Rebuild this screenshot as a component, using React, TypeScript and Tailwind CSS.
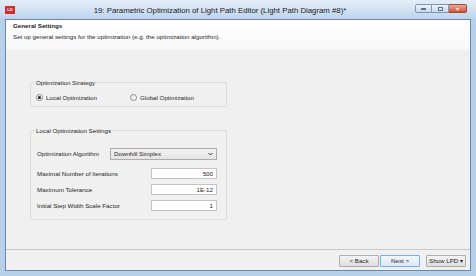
import React from 'react';

const font = { fontFamily: '"Liberation Sans", Arial, sans-serif' };

const Radio: React.FC<{ checked?: boolean; label: string }> = ({ checked, label }) => (
  <div className="flex items-center gap-[3px]">
    <div className="w-[7px] h-[7px] rounded-full border border-[#8a8a8a] bg-gradient-to-br from-[#e6e6e6] to-white flex items-center justify-center">
      {checked && <div className="w-[3px] h-[3px] rounded-full bg-[#222]" />}
    </div>
    <span>{label}</span>
  </div>
);

const Field: React.FC<{ label: string; value: string }> = ({ label, value }) => (
  <div className="flex items-center h-[11px]">
    <span className="w-[114px]">{label}</span>
    <div className="w-[66px] h-[11px] border border-[#c4c4c4] bg-white flex items-center justify-end pr-[3px]">{value}</div>
  </div>
);

const Btn: React.FC<{ label: string; def?: boolean; className?: string }> = ({ label, def, className }) => (
  <div
    className={`h-[12px] flex items-center justify-center rounded-[1px] border ${
      def ? 'border-[#6fb2e8] bg-gradient-to-b from-[#f2f7fc] to-[#dbe8f4]' : 'border-[#adadad] bg-gradient-to-b from-[#f4f4f4] to-[#dedede]'
    } ${className ?? ''}`}
  >
    {label}
  </div>
);

export default function App() {
  return (
    <div className="w-[476px] h-[276px] bg-[#b8d1eb] flex flex-col text-[6.2px] text-[#1e1e1e] overflow-hidden" style={font}>
      {/* Title bar */}
      <div className="h-[19px] relative flex items-center bg-gradient-to-b from-[#e4edf8] via-[#d3e2f3] to-[#bcd3ec]">
        <div className="absolute left-[5px] top-[6px] w-[10px] h-[8px] bg-[#d42a2a] flex items-center justify-center text-white text-[4px] font-bold leading-none">
          LD
        </div>
        <div className="flex-1 text-center text-[7.8px] text-[#1a1a1a] pt-[3px] pr-[36px]">
          19: Parametric Optimization of Light Path Editor (Light Path Diagram #8)*
        </div>
        <div className="absolute right-[9px] top-[4px] flex">
          <div className="w-[17px] h-[9px] border border-[#7d97b8] rounded-l-[2px] bg-gradient-to-b from-[#eef3fa] to-[#c9d8ea] flex items-center justify-center">
            <div className="w-[5px] h-[2px] bg-[#5a7292]" />
          </div>
          <div className="w-[17px] h-[9px] border-y border-r border-[#7d97b8] bg-gradient-to-b from-[#eef3fa] to-[#c9d8ea] flex items-center justify-center">
            <div className="w-[5px] h-[4px] border border-[#5a7292]" />
          </div>
          <div className="w-[18px] h-[9px] border-y border-r border-[#9a4a3a] rounded-r-[2px] bg-gradient-to-b from-[#eba898] to-[#d0503a] flex items-center justify-center text-white text-[6px] font-bold leading-none">
            ×
          </div>
        </div>
      </div>

      {/* Client area */}
      <div className="flex-1 ml-[5px] mr-[5px] mb-[5px] border border-[#6b86a8] bg-[#f0f0f0] flex flex-col">
        <div className="h-[30px] bg-gradient-to-b from-white to-[#f8f8f8] pl-[7px] pt-[1px] flex flex-col gap-[2px]">
          <div className="font-bold">General Settings</div>
          <div>Set up general settings for the optimization (e.g. the optimization algorithm).</div>
        </div>

        <div className="flex-1 pl-[24px] pt-[32px]">
          {/* Optimization Strategy */}
          <div className="relative w-[197px] h-[25px] border border-[#dcdcdc] rounded-[2px]">
            <span className="absolute -top-[5px] left-[4px] bg-[#f0f0f0] px-[1px]">Optimization Strategy</span>
            <div className="flex pl-[5px] pt-[10px]">
              <div className="w-[94px]"><Radio checked label="Local Optimization" /></div>
              <Radio label="Global Optimization" />
            </div>
          </div>

          {/* Local Optimization Settings */}
          <div className="relative w-[197px] h-[90px] mt-[23px] border border-[#dcdcdc] rounded-[2px]">
            <span className="absolute -top-[5px] left-[4px] bg-[#f0f0f0] px-[1px]">Local Optimization Settings</span>
            <div className="pl-[6px] pt-[17px] flex flex-col">
              <div className="flex items-center h-[12px]">
                <span className="w-[73px]">Optimization Algorithm</span>
                <div className="w-[107px] h-[12px] border border-[#acacac] bg-gradient-to-b from-[#f4f4f4] to-[#e4e4e4] flex items-center justify-between pl-[3px] pr-[3px]">
                  <span>Downhill Simplex</span>
                  <svg width="5" height="4" viewBox="0 0 5 4"><path d="M0.5 1 L2.5 3 L4.5 1" stroke="#333" strokeWidth="1" fill="none" /></svg>
                </div>
              </div>
              <div className="flex flex-col gap-[5px] mt-[8px]">
                <Field label="Maximal Number of Iterations" value="500" />
                <Field label="Maximum Tolerance" value="1E-12" />
                <Field label="Initial Step Width Scale Factor" value="1" />
              </div>
            </div>
          </div>
        </div>

        {/* Footer */}
        <div className="h-[21px] border-t border-[#c8c8c8] flex items-start justify-end pr-[4px] pt-[5px]">
          <Btn label="< Back" className="w-[40px]" />
          <Btn label="Next >" def className="w-[40px] ml-[1px]" />
          <Btn label="Show  LPD ▾" className="w-[40px] ml-[6px]" />
        </div>
      </div>
    </div>
  );
}
